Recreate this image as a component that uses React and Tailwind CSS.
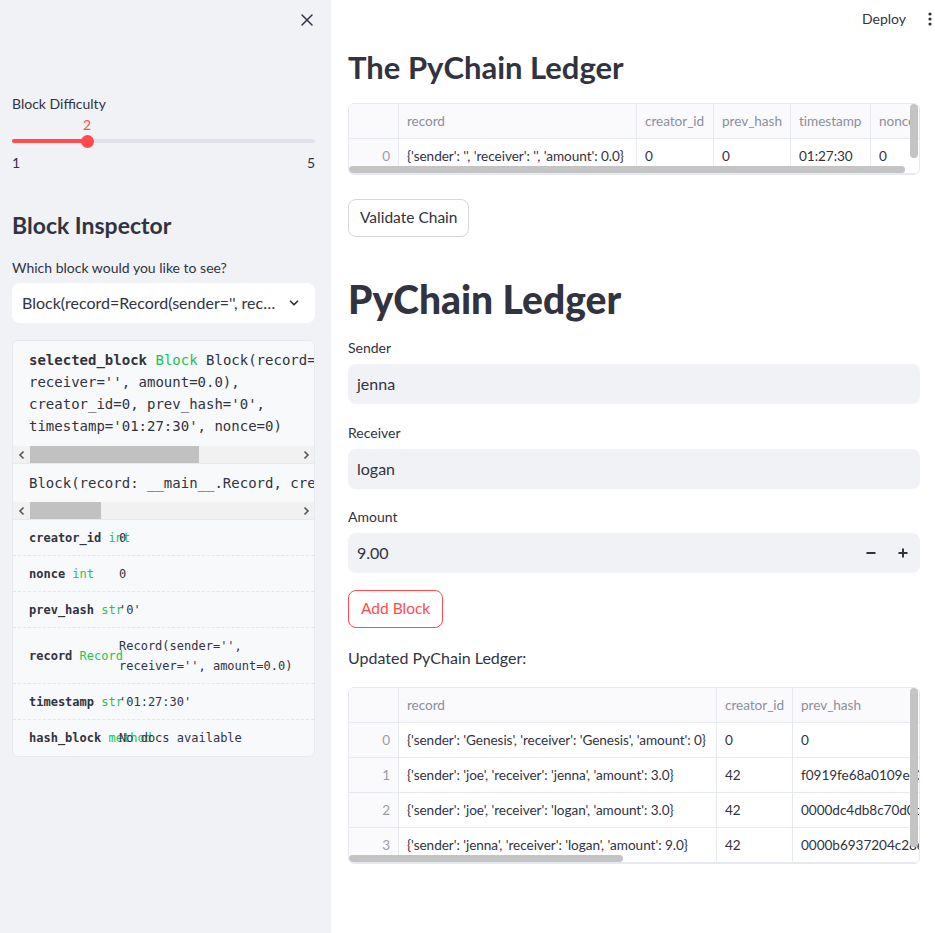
import React from "react";

const ledger1 = {
  cols: [
    { name: "record", w: "w-[238px]" },
    { name: "creator_id", w: "w-[77px]" },
    { name: "prev_hash", w: "w-[77px]" },
    { name: "timestamp", w: "w-[80px]" },
    { name: "nonce", w: "w-[80px]" },
  ],
  rows: [["{'sender': '', 'receiver': '', 'amount': 0.0}", "0", "0", "01:27:30", "0"]],
};

const ledger2 = {
  cols: [
    { name: "record", w: "w-[318px]" },
    { name: "creator_id", w: "w-[76px]" },
    { name: "prev_hash", w: "w-[160px]" },
    { name: "timestamp", w: "w-[80px]" },
  ],
  rows: [
    ["{'sender': 'Genesis', 'receiver': 'Genesis', 'amount': 0}", "0", "0", "01:27:30"],
    ["{'sender': 'joe', 'receiver': 'jenna', 'amount': 3.0}", "42", "f0919fe68a0109ec3a71", "01:28:02"],
    ["{'sender': 'joe', 'receiver': 'logan', 'amount': 3.0}", "42", "0000dc4db8c70d0c4e11", "01:28:14"],
    ["{'sender': 'jenna', 'receiver': 'logan', 'amount': 9.0}", "42", "0000b6937204c28e9d02", "01:28:30"],
  ],
};

function DataTable({ data, hThumb, vThumb }) {
  return (
    <div className="relative overflow-hidden rounded-md border border-[#e6e9ef] text-[13.6px] tracking-[-0.05px]">
      <div className="flex h-[35px] bg-[#fafafc] text-[#8c8f9b]">
        <div className="w-[50px] shrink-0 border-r border-b border-[#e6e9ef]" />
        {data.cols.map((c) => (
          <div key={c.name} className={`${c.w} shrink-0 flex items-center px-2 border-r border-b border-[#e6e9ef] whitespace-nowrap overflow-hidden`}>
            {c.name}
          </div>
        ))}
      </div>
      {data.rows.map((r, i) => (
        <div key={i} className="flex h-[35px] text-[#31333f]">
          <div className="w-[50px] shrink-0 flex items-center justify-end pr-2 bg-[#fafafc] text-[#9a9ca6] border-r border-b border-[#e6e9ef]">
            {i}
          </div>
          {r.map((v, j) => (
            <div key={j} className={`${data.cols[j].w} shrink-0 flex items-center px-2 border-r border-b border-[#e6e9ef] whitespace-nowrap overflow-hidden`}>
              {v}
            </div>
          ))}
        </div>
      ))}
      <div className={`absolute left-0 bottom-[1px] h-[7px] rounded-full bg-[#c4c4c4] ${hThumb}`} />
      <div className={`absolute right-[1px] top-0 w-[8px] rounded-full bg-[#c4c4c4] ${vThumb}`} />
    </div>
  );
}

function Chevron({ dir }) {
  return (
    <svg width="8" height="10" viewBox="0 0 8 10" className="text-[#555]">
      <path d={dir === "l" ? "M5.5 1.5 2 5l3.5 3.5" : "M2.5 1.5 6 5 2.5 8.5"} fill="none" stroke="currentColor" strokeWidth="1.6" />
    </svg>
  );
}

function ScrollBar({ thumb }) {
  return (
    <div className="flex h-[17px] items-center bg-[#f1f1f1]">
      <div className="w-[17px] flex justify-center"><Chevron dir="l" /></div>
      <div className="flex-1 h-full">
        <div className={`h-full bg-[#c1c1c1] ${thumb}`} />
      </div>
      <div className="w-[17px] flex justify-center"><Chevron dir="r" /></div>
    </div>
  );
}

function Attr({ name, type, children, tall }) {
  return (
    <div className={`grid grid-cols-[90px_1fr] items-center px-4 border-b border-dashed border-[#e4e6eb] ${tall ? "h-[56px]" : "h-[36px]"} last:border-b-0`}>
      <div className="whitespace-nowrap">
        <span className="font-bold text-[#31333f]">{name}</span>{" "}
        <span className="text-[#21c354]">{type}</span>
      </div>
      <div className="whitespace-pre leading-[20px] text-[#31333f]">{children}</div>
    </div>
  );
}

function Field({ label, value, mt, number }) {
  return (
    <div className={mt}>
      <div className="text-[14px] leading-[20px] text-[#31333f]">{label}</div>
      <div className="mt-[6px] h-[40px] rounded-lg bg-[#f0f2f6] flex items-center px-[9px] text-[16px] text-[#31333f]">
        <span className="flex-1">{value}</span>
        {number && (
          <div className="flex items-center gap-[22px] pr-[3px]">
            <svg width="10" height="10" viewBox="0 0 10 10"><path d="M0.5 5h9" stroke="#31333f" strokeWidth="2" /></svg>
            <svg width="10" height="10" viewBox="0 0 10 10"><path d="M0.5 5h9M5 0.5v9" stroke="#31333f" strokeWidth="2" /></svg>
          </div>
        )}
      </div>
    </div>
  );
}

export default function App() {
  return (
    <div className="flex min-h-screen w-full font-[Lato,sans-serif] text-[#31333f]">
      {/* Sidebar */}
      <aside className="w-[331px] shrink-0 bg-[#f0f2f6] min-h-screen pl-[12px] pr-[16px]">
        <div className="h-[40px] flex items-center justify-end -mr-[2px]">
          <svg width="20" height="20" viewBox="0 0 24 24" fill="none" stroke="#31333f" strokeWidth="1.8" strokeLinecap="round">
            <path d="M6 6l12 12M18 6 6 18" />
          </svg>
        </div>

        <div className="mt-[54px] text-[14px] leading-[20px]">Block Difficulty</div>
        <div className="relative mt-[3px] h-[16px] text-[14px] leading-[16px] text-[#ff4b4b]">
          <span className="absolute left-[75px] -translate-x-1/2">2</span>
        </div>
        <div className="relative h-[16px] flex items-center">
          <div className="h-[4px] w-full rounded-full bg-[#dfe2e8]" />
          <div className="absolute left-0 h-[4px] w-[76px] rounded-full bg-[#ff4b4b]" />
          <div className="absolute left-[69px] h-[13px] w-[13px] rounded-full bg-[#ff4b4b]" />
        </div>
        <div className="mt-[4px] flex justify-between text-[14px] leading-[20px]">
          <span>1</span>
          <span>5</span>
        </div>

        <h2 className="mt-[36px] text-[23px] leading-[32px] font-bold">Block Inspector</h2>
        <div className="mt-[17px] text-[14px] leading-[20px]">Which block would you like to see?</div>
        <div className="mt-[5px] h-[40px] rounded-lg bg-white flex items-center pl-[10px] pr-[14px] text-[16px]">
          <span className="flex-1 whitespace-nowrap overflow-hidden">Block(record=Record(sender='', rec…</span>
          <svg width="14" height="14" viewBox="0 0 24 24" fill="none" stroke="#31333f" strokeWidth="3" strokeLinecap="round" strokeLinejoin="round">
            <path d="M6 9l6 6 6-6" />
          </svg>
        </div>

        <div className="mt-[17px] rounded-md border border-[#e6e9ef] bg-[#f8f9fb] overflow-hidden font-['DejaVu_Sans_Mono',monospace]">
          <div className="border-b border-[#e6e9ef]">
            <pre className="pt-[8px] pb-[9px] pl-4 text-[14px] leading-[22px] overflow-hidden whitespace-pre font-['DejaVu_Sans_Mono',monospace]">
              <span className="font-bold">selected_block</span> <span className="text-[#21c354]">Block</span>{" Block(record=Record(sender='',\n"}
              {"receiver='', amount=0.0),\ncreator_id=0, prev_hash='0',\ntimestamp='01:27:30', nonce=0)"}
            </pre>
            <ScrollBar thumb="w-[169px]" />
          </div>
          <div className="border-b border-[#e6e9ef]">
            <pre className="pt-[8px] pb-[8px] pl-4 text-[14px] leading-[22px] overflow-hidden whitespace-pre font-['DejaVu_Sans_Mono',monospace]">
              Block(record: __main__.Record, creator_id: int, prev_hash: str)
            </pre>
            <ScrollBar thumb="w-[71px]" />
          </div>
          <div className="text-[12px]">
            <Attr name="creator_id" type="int">0</Attr>
            <Attr name="nonce" type="int">0</Attr>
            <Attr name="prev_hash" type="str">'0'</Attr>
            <Attr name="record" type="Record" tall>{"Record(sender='',\nreceiver='', amount=0.0)"}</Attr>
            <Attr name="timestamp" type="str">'01:27:30'</Attr>
            <Attr name="hash_block" type="method">No docs available</Attr>
          </div>
        </div>
      </aside>

      {/* Main */}
      <main className="flex-1 bg-white">
        <header className="h-[37px] flex items-center justify-end gap-[22px] pr-[3px] text-[14px]">
          <span>Deploy</span>
          <svg width="4" height="14" viewBox="0 0 4 14" fill="#31333f">
            <circle cx="2" cy="2" r="1.6" />
            <circle cx="2" cy="7" r="1.6" />
            <circle cx="2" cy="12" r="1.6" />
          </svg>
        </header>

        <div className="pl-[17px] w-[589px]">
          <h2 className="mt-[11px] text-[31px] leading-[38px] font-bold">The PyChain Ledger</h2>
          <div className="mt-[17px]">
            <DataTable data={ledger1} hThumb="w-[556px]" vThumb="h-[54px]" />
          </div>
          <button className="mt-[24px] h-[38px] px-[11px] rounded-lg border border-[#d6d6d9] bg-white text-[15.5px]">
            Validate Chain
          </button>

          <h1 className="mt-[38px] text-[39px] leading-[48px] font-black">PyChain Ledger</h1>

          <Field label="Sender" value="jenna" mt="mt-[15px]" />
          <Field label="Receiver" value="logan" mt="mt-[19px]" />
          <Field label="Amount" value="9.00" mt="mt-[18px]" number />

          <button className="mt-[17px] h-[38px] px-[12px] rounded-lg border border-[#ff4b4b] bg-white text-[15.5px] text-[#ff4b4b]">
            Add Block
          </button>

          <div className="mt-[18px] text-[16px] leading-[24px]">Updated PyChain Ledger:</div>
          <div className="mt-[17px]">
            <DataTable data={ledger2} hThumb="w-[274px]" vThumb="h-[159px]" />
          </div>
        </div>
      </main>
    </div>
  );
}
